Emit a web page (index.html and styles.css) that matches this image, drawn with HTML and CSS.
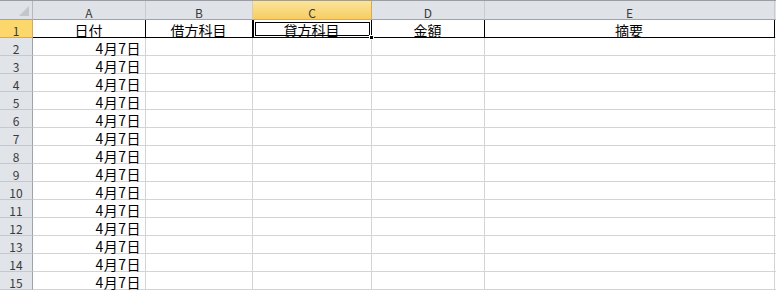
FILE: index.html
```html
<!DOCTYPE html>
<html lang="ja">
<head>
    <meta charset="UTF-8">
    <title>Sheet1</title>
    <link rel="stylesheet" href="styles.css">
</head>
<body>
    <div class="sheet">
        <!-- column headers -->
        <div class="row head">
            <div class="corner"><span class="tri"></span></div>
            <div class="ch ca">A</div>
            <div class="ch cb">B</div>
            <div class="ch cc sel">C</div>
            <div class="ch cd">D</div>
            <div class="ch ce">E</div>
            <div class="ch cf"></div>
        </div>

        <!-- title row -->
        <div class="row title">
            <div class="rh sel">1</div>
            <div class="cell ca mid">日付</div>
            <div class="cell cb mid">借方科目</div>
            <div class="cell cc mid active">貸方科目<span class="handle"></span></div>
            <div class="cell cd mid">金額</div>
            <div class="cell ce mid">摘要</div>
            <div class="cell cf"></div>
        </div>

        <div class="row"><div class="rh">2</div><div class="cell ca num">4月7日</div><div class="cell cb"></div><div class="cell cc"></div><div class="cell cd"></div><div class="cell ce"></div><div class="cell cf"></div></div>
        <div class="row"><div class="rh">3</div><div class="cell ca num">4月7日</div><div class="cell cb"></div><div class="cell cc"></div><div class="cell cd"></div><div class="cell ce"></div><div class="cell cf"></div></div>
        <div class="row"><div class="rh">4</div><div class="cell ca num">4月7日</div><div class="cell cb"></div><div class="cell cc"></div><div class="cell cd"></div><div class="cell ce"></div><div class="cell cf"></div></div>
        <div class="row"><div class="rh">5</div><div class="cell ca num">4月7日</div><div class="cell cb"></div><div class="cell cc"></div><div class="cell cd"></div><div class="cell ce"></div><div class="cell cf"></div></div>
        <div class="row"><div class="rh">6</div><div class="cell ca num">4月7日</div><div class="cell cb"></div><div class="cell cc"></div><div class="cell cd"></div><div class="cell ce"></div><div class="cell cf"></div></div>
        <div class="row"><div class="rh">7</div><div class="cell ca num">4月7日</div><div class="cell cb"></div><div class="cell cc"></div><div class="cell cd"></div><div class="cell ce"></div><div class="cell cf"></div></div>
        <div class="row"><div class="rh">8</div><div class="cell ca num">4月7日</div><div class="cell cb"></div><div class="cell cc"></div><div class="cell cd"></div><div class="cell ce"></div><div class="cell cf"></div></div>
        <div class="row"><div class="rh">9</div><div class="cell ca num">4月7日</div><div class="cell cb"></div><div class="cell cc"></div><div class="cell cd"></div><div class="cell ce"></div><div class="cell cf"></div></div>
        <div class="row"><div class="rh">10</div><div class="cell ca num">4月7日</div><div class="cell cb"></div><div class="cell cc"></div><div class="cell cd"></div><div class="cell ce"></div><div class="cell cf"></div></div>
        <div class="row"><div class="rh">11</div><div class="cell ca num">4月7日</div><div class="cell cb"></div><div class="cell cc"></div><div class="cell cd"></div><div class="cell ce"></div><div class="cell cf"></div></div>
        <div class="row"><div class="rh">12</div><div class="cell ca num">4月7日</div><div class="cell cb"></div><div class="cell cc"></div><div class="cell cd"></div><div class="cell ce"></div><div class="cell cf"></div></div>
        <div class="row"><div class="rh">13</div><div class="cell ca num">4月7日</div><div class="cell cb"></div><div class="cell cc"></div><div class="cell cd"></div><div class="cell ce"></div><div class="cell cf"></div></div>
        <div class="row"><div class="rh">14</div><div class="cell ca num">4月7日</div><div class="cell cb"></div><div class="cell cc"></div><div class="cell cd"></div><div class="cell ce"></div><div class="cell cf"></div></div>
        <div class="row"><div class="rh">15</div><div class="cell ca num">4月7日</div><div class="cell cb"></div><div class="cell cc"></div><div class="cell cd"></div><div class="cell ce"></div><div class="cell cf"></div></div>
    </div>
</body>
</html>
```

FILE: styles.css
```css
* {
    box-sizing: border-box;
}

body {
    margin: 0;
    padding: 0;
    background: #fff;
    font-family: "Noto Sans CJK JP", "DejaVu Sans", sans-serif;
    color: #000;
}

.sheet {
    width: 776px;
    height: 290px;
    overflow: hidden;
}

.row {
    display: flex;
    height: 18px;
}

/* column widths */
.ca { width: 113px; }
.cb { width: 107px; }
.cc { width: 119px; }
.cd { width: 113px; }
.ce { width: 290px; }
.cf { width: 60px; flex-shrink: 0; }

/* header row */
.head {
    height: 20px;
    border-top: 1px solid #9a9ea4;
}

.corner {
    position: relative;
    width: 33px;
    flex-shrink: 0;
    background: #dfe3e8;
    border-right: 1px solid #b5bac0;
    border-bottom: 1px solid #9ea3a9;
}

.tri {
    position: absolute;
    right: 3px;
    bottom: 3px;
    width: 0;
    height: 0;
    border-left: 10px solid transparent;
    border-bottom: 10px solid #c3c7cc;
}

.ch {
    flex-shrink: 0;
    display: flex;
    align-items: flex-end;
    justify-content: center;
    background: #dfe3e8;
    border-right: 1px solid #c8ccd2;
    border-bottom: 1px solid #9ea3a9;
    font-size: 12px;
    line-height: 13px;
    color: #3a3a3a;
}

.ch.sel {
    background: linear-gradient(#fbe49c, #f6cd62);
    border-right-color: #e2a93c;
    border-bottom-color: #e2a93c;
}

/* row headers */
.rh {
    width: 33px;
    flex-shrink: 0;
    display: flex;
    align-items: flex-end;
    justify-content: center;
    background: #e1e5ea;
    border-right: 1px solid #9ea3a9;
    border-bottom: 1px solid #c5c9cf;
    font-size: 12px;
    line-height: 13px;
    color: #3a3a3a;
}

.rh.sel {
    background: #fcd86c;
    border-right-color: #e2a93c;
    border-bottom-color: #e2a93c;
}

/* cells */
.cell {
    flex-shrink: 0;
    display: flex;
    align-items: flex-end;
    padding: 0 4px 0 3px;
    border-right: 1px solid #d4d4d4;
    border-bottom: 1px solid #d4d4d4;
    font-size: 14px;
    line-height: 14px;
    white-space: nowrap;
}

.cell.mid {
    justify-content: center;
}

.cell.num {
    justify-content: flex-end;
    letter-spacing: 0.5px;
}

.title .cell {
    border-right-color: #000;
    border-bottom-color: #000;
}

.title .cf {
    border-right-color: #d4d4d4;
    border-bottom-color: #d4d4d4;
}

.cell.active {
    position: relative;
    box-shadow: inset 1px 0 0 #000, inset 2px 2px 0 #fff, inset -1px -1px 0 #fff, inset 3px 3px 0 #000, inset -2px -2px 0 #000;
}

.handle {
    position: absolute;
    right: -3px;
    bottom: -3px;
    width: 5px;
    height: 5px;
    background: #000;
    border: 1px solid #fff;
}
```
